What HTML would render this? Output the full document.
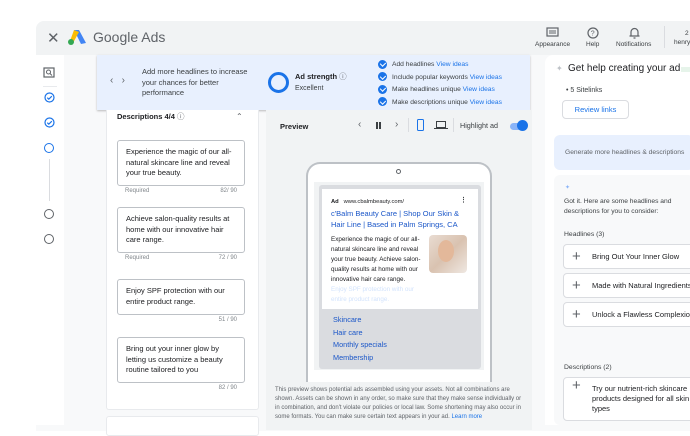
<!DOCTYPE html>
<html><head><style>
*{margin:0;padding:0;box-sizing:border-box}
body{width:690px;height:422px;overflow:hidden;background:#fff;font-family:"Liberation Sans",Arial,sans-serif;color:#3c4043;position:relative}
.a{position:absolute}
.t{font-size:7px;line-height:10px;color:#3c4043}
.lnk{color:#1a73e8}
.box{position:absolute;left:117px;width:128px;border:1px solid #bdc1c6;border-radius:3px;background:#fff;padding:6px 8px;font-size:7.5px;line-height:10.5px;color:#202124}
.ct{position:absolute;left:125px;width:112px;font-size:6px;color:#80868b;display:flex;justify-content:space-between}
.chk{display:inline-block;width:9px;height:9px;border-radius:50%;background:#1a73e8;vertical-align:middle;margin-right:5px;position:relative}
.chk:after{content:"";position:absolute;left:2.5px;top:1.5px;width:2.5px;height:4px;border:solid #fff;border-width:0 1.3px 1.3px 0;transform:rotate(45deg)}
.sug{position:absolute;left:563px;width:140px;height:25px;border:1px solid #dadce0;border-radius:4px;background:#fff;font-size:7.5px;color:#202124;display:flex;align-items:center;padding-left:28px}
.sug:before{content:"+";position:absolute;left:8px;top:3px;font-size:15px;color:#5f6368}
</style></head><body>
<div class="a" style="left:36px;top:21px;width:660px;height:410px;background:#f8f9fa;border-radius:8px 0 0 0"></div>
<div class="a" style="left:36px;top:21px;width:660px;height:34px;background:#f1f3f4;border-radius:8px 0 0 0"></div>
<div class="a" style="left:47px;top:29px;font-size:15px;color:#5f6368">✕</div>
<svg class="a" style="left:67px;top:28px" width="20" height="18" viewBox="0 0 20 18"><path d="M7 2 L12 2 L19 15 L14 16Z" fill="#4285f4"/><path d="M7 2 L12 4 L6 15 L3 13Z" fill="#fbbc04"/><circle cx="4" cy="14" r="3" fill="#34a853"/></svg>
<div class="a" style="left:93px;top:29px;font-size:14px;color:#5f6368">Google Ads</div>
<svg class="a" style="left:546px;top:27px" width="13" height="11"><rect x="1" y="1" width="11" height="8" fill="none" stroke="#5f6368" stroke-width="1.2"/><path d="M3 4h7M3 6h7" stroke="#5f6368"/></svg>
<div class="a t" style="left:535px;top:40px;font-size:6.5px">Appearance</div>
<svg class="a" style="left:587px;top:27px" width="12" height="12"><circle cx="6" cy="6" r="5" fill="none" stroke="#5f6368" stroke-width="1.2"/><text x="3.7" y="8.7" font-size="7" fill="#5f6368" font-family="Liberation Sans">?</text></svg>
<div class="a t" style="left:586px;top:40px;font-size:6.5px">Help</div>
<svg class="a" style="left:629px;top:27px" width="11" height="12"><path d="M2 9V5a3.5 3.5 0 0 1 7 0v4h1.5H.5M4.5 11h2" fill="none" stroke="#5f6368" stroke-width="1.2"/></svg>
<div class="a t" style="left:616px;top:40px;font-size:6.5px">Notifications</div>
<div class="a" style="left:664px;top:26px;width:1px;height:22px;background:#dadce0"></div>
<div class="a t" style="left:685px;top:29px;font-size:6.5px">2</div>
<div class="a t" style="left:674px;top:38px;font-size:6.5px">henry</div>
<div class="a" style="left:36px;top:55px;width:28px;height:370px;background:#fff"></div>
<svg class="a" style="left:43px;top:67px" width="12" height="11"><rect x="1" y="1" width="10" height="9" fill="none" stroke="#5f6368" stroke-width="1.2"/><circle cx="5.5" cy="5" r="2" fill="none" stroke="#5f6368"/><path d="M7 6.5l2 2" stroke="#5f6368"/></svg>
<div class="a" style="left:43px;top:86px;width:14px;height:1px;background:#e8eaed"></div>
<svg class="a" style="left:44px;top:92px" width="11" height="11"><circle cx="5.5" cy="5.5" r="4.5" fill="none" stroke="#1a73e8" stroke-width="1.2"/><path d="M3.3 5.7l1.5 1.5 3-3" fill="none" stroke="#1a73e8" stroke-width="1.2"/></svg>
<svg class="a" style="left:44px;top:117px" width="11" height="11"><circle cx="5.5" cy="5.5" r="4.5" fill="none" stroke="#1a73e8" stroke-width="1.2"/><path d="M3.3 5.7l1.5 1.5 3-3" fill="none" stroke="#1a73e8" stroke-width="1.2"/></svg>
<div class="a" style="left:44px;top:143px;width:10px;height:10px;border:1.2px solid #1a73e8;border-radius:50%"></div>
<div class="a" style="left:49px;top:159px;width:1px;height:42px;background:#dadce0"></div>
<div class="a" style="left:44px;top:209px;width:10px;height:10px;border:1.2px solid #5f6368;border-radius:50%"></div>
<div class="a" style="left:44px;top:234px;width:10px;height:10px;border:1.2px solid #5f6368;border-radius:50%"></div>
<div class="a" style="left:97px;top:55px;width:433px;height:55px;background:#e8f0fe;box-shadow:0 1px 2px rgba(0,0,0,.25)"></div>
<div class="a" style="left:110px;top:75px;font-size:10px;color:#5f6368">‹&nbsp;&nbsp;&nbsp;›</div>
<div class="a t" style="left:142px;top:67px;width:112px;font-size:7.5px;line-height:10.5px">Add more headlines to increase your chances for better performance</div>
<div class="a" style="left:268px;top:72px;width:21px;height:21px;border:3.5px solid #1a73e8;border-radius:50%"></div>
<div class="a t" style="left:295px;top:72px;font-size:7.5px;font-weight:bold;color:#202124">Ad strength <span style="font-weight:normal;color:#5f6368">ⓘ</span></div>
<div class="a t" style="left:295px;top:84px;font-size:7px">Excellent</div>
<div class="a t" style="left:378px;top:59px;line-height:12.5px;font-size:6.7px">
<div><span class="chk"></span>Add headlines <span class="lnk">View ideas</span></div>
<div><span class="chk"></span>Include popular keywords <span class="lnk">View ideas</span></div>
<div><span class="chk"></span>Make headlines unique <span class="lnk">View ideas</span></div>
<div><span class="chk"></span>Make descriptions unique <span class="lnk">View ideas</span></div>
</div>
<div class="a" style="left:106px;top:110px;width:153px;height:300px;background:#fff;border:1px solid #e8eaed;border-top:none;border-radius:0 0 3px 3px"></div>
<div class="a" style="left:106px;top:416px;width:153px;height:20px;background:#fff;border:1px solid #e8eaed;border-radius:3px"></div>
<div class="a t" style="left:117px;top:112px;font-size:7.5px;font-weight:bold;color:#202124">Descriptions 4/4 <span style="font-weight:normal;color:#5f6368">ⓘ</span></div>
<div class="a t" style="left:236px;top:112px;font-size:8px;color:#5f6368">⌃</div>
<div class="box" style="top:140px;height:46px">Experience the magic of our all-natural skincare line and reveal your true beauty.</div>
<div class="ct" style="top:188px"><span>Required</span><span>82/ 90</span></div>
<div class="box" style="top:207px;height:46px">Achieve salon-quality results at home with our innovative hair care range.</div>
<div class="ct" style="top:255px"><span>Required</span><span>72 / 90</span></div>
<div class="box" style="top:279px;height:36px">Enjoy SPF protection with our entire product range.</div>
<div class="ct" style="top:317px"><span></span><span>51 / 90</span></div>
<div class="box" style="top:337px;height:46px">Bring out your inner glow by letting us customize a beauty routine tailored to you</div>
<div class="ct" style="top:385px"><span></span><span>82 / 90</span></div>
<div class="a" style="left:266px;top:110px;width:266px;height:320px;background:#f1f3f4"></div>
<div class="a t" style="left:280px;top:122px;font-size:7.5px;font-weight:bold;color:#202124">Preview</div>
<div class="a" style="left:358px;top:119px;font-size:10px;color:#5f6368">‹</div>
<div class="a" style="left:376px;top:122px;width:2px;height:7px;background:#3c4043;box-shadow:3px 0 0 #3c4043"></div>
<div class="a" style="left:395px;top:119px;font-size:10px;color:#5f6368">›</div>
<div class="a" style="left:408px;top:118px;width:1px;height:14px;background:#dadce0"></div>
<div class="a" style="left:417px;top:119px;width:7px;height:12px;border:1.3px solid #1a73e8;border-radius:1.5px"></div>
<div class="a" style="left:436px;top:121px;width:10px;height:7px;border:1.2px solid #3c4043"></div>
<div class="a" style="left:434px;top:128px;width:14px;height:1.3px;background:#3c4043"></div>
<div class="a" style="left:453px;top:118px;width:1px;height:14px;background:#dadce0"></div>
<div class="a t" style="left:460px;top:121px;font-size:7.2px">Highlight ad</div>
<div class="a" style="left:510px;top:123px;width:16px;height:7px;background:#8ab4f8;border-radius:4px"></div>
<div class="a" style="left:517px;top:120px;width:11px;height:11px;background:#1a73e8;border-radius:50%"></div>
<div class="a" style="left:306px;top:162px;width:186px;height:220px;background:#fff;border:2px solid #bdc1c6;border-bottom:none;border-radius:14px 14px 0 0"></div>
<div class="a" style="left:396px;top:169px;width:5px;height:5px;border:1px solid #5f6368;border-radius:50%"></div>
<div class="a" style="left:314px;top:182px;width:170px;height:188px;background:#f1f3f4"></div>
<div class="a" style="left:319px;top:185px;width:162px;height:184px;background:#dadce0;border-radius:3px"></div>
<div class="a" style="left:322px;top:189px;width:156px;height:120px;background:#fff"></div>
<div class="a t" style="left:331px;top:197px;font-size:5.8px;color:#202124"><b>Ad</b>&nbsp;&nbsp; www.cbalmbeauty.com/</div>
<div class="a t" style="left:460px;top:196px;font-size:7px;font-weight:bold">⋮</div>
<div class="a" style="left:331px;top:208px;width:140px;font-size:7.5px;line-height:11px;color:#1a56c8">c'Balm Beauty Care | Shop Our Skin &amp; Hair Line | Based in Palm Springs, CA</div>
<div class="a" style="left:331px;top:235px;width:92px;font-size:6.3px;line-height:10px;color:#202124">Experience the magic of our all-natural skincare line and reveal your true beauty. Achieve salon-quality results at home with our innovative hair care range.<br><span style="color:#d2e3fc">Enjoy SPF protection with our entire product range.</span></div>
<div class="a" style="left:429px;top:235px;width:38px;height:38px;border-radius:4px;background:linear-gradient(135deg,#e9dcd2,#d9c2b0 50%,#efe8e2)"></div>
<div class="a" style="left:438px;top:240px;width:16px;height:22px;border-radius:50%;background:#e3b89a"></div>
<div class="a" style="left:333px;top:314px;font-size:7.3px;line-height:12.5px;color:#1a56c8">Skincare<br>Hair care<br>Monthly specials<br>Membership</div>
<div class="a" style="left:275px;top:386px;width:250px;font-size:6px;line-height:9px;color:#5f6368">This preview shows potential ads assembled using your assets. Not all combinations are shown. Assets can be shown in any order, so make sure that they make sense individually or in combination, and don't violate our policies or local law. Some shortening may also occur in some formats. You can make sure certain text appears in your ad. <span class="lnk">Learn more</span></div>
<div class="a" style="left:545px;top:55px;width:150px;height:370px;background:#fff;border-radius:8px 0 0 0"></div>
<div class="a" style="left:556px;top:64px;font-size:8px;color:#bdc1c6">✦</div>
<div class="a" style="left:568px;top:63px;font-size:10px;color:#202124;white-space:nowrap">Get help creating your ad</div>
<div class="a" style="left:681px;top:67px;width:12px;height:5px;background:#e6f4ea"></div>
<div class="a t" style="left:566px;top:86px;font-size:7px">• 5 Sitelinks</div>
<div class="a" style="left:562px;top:100px;width:67px;height:19px;border:1px solid #dadce0;border-radius:4px;font-size:7.5px;color:#1a73e8;text-align:center;line-height:17px">Review links</div>
<div class="a" style="left:554px;top:135px;width:140px;height:35px;background:#e8f0fe;border-radius:6px"></div>
<div class="a t" style="left:565px;top:148px;font-size:6.7px;color:#5f6368;white-space:nowrap">Generate more headlines &amp; descriptions</div>
<div class="a" style="left:554px;top:175px;width:140px;height:250px;background:#f8f9fa;border-radius:6px"></div>
<div class="a t" style="left:565px;top:183px;font-size:6px;color:#8ab4f8">✦</div>
<div class="a t" style="left:564px;top:197px;width:125px;font-size:6.7px;line-height:10px">Got it. Here are some headlines and descriptions for you to consider:</div>
<div class="a t" style="left:564px;top:230px;font-size:6.8px">Headlines (3)</div>
<div class="sug" style="top:244px">Bring Out Your Inner Glow</div>
<div class="sug" style="top:273px;white-space:nowrap">Made with Natural Ingredients</div>
<div class="sug" style="top:302px;white-space:nowrap">Unlock a Flawless Complexion</div>
<div class="a t" style="left:564px;top:363px;font-size:6.8px">Descriptions (2)</div>
<div class="sug" style="top:377px;height:44px;line-height:10px;white-space:nowrap">Try our nutrient-rich skincare<br>products designed for all skin<br>types</div>
</body></html>
